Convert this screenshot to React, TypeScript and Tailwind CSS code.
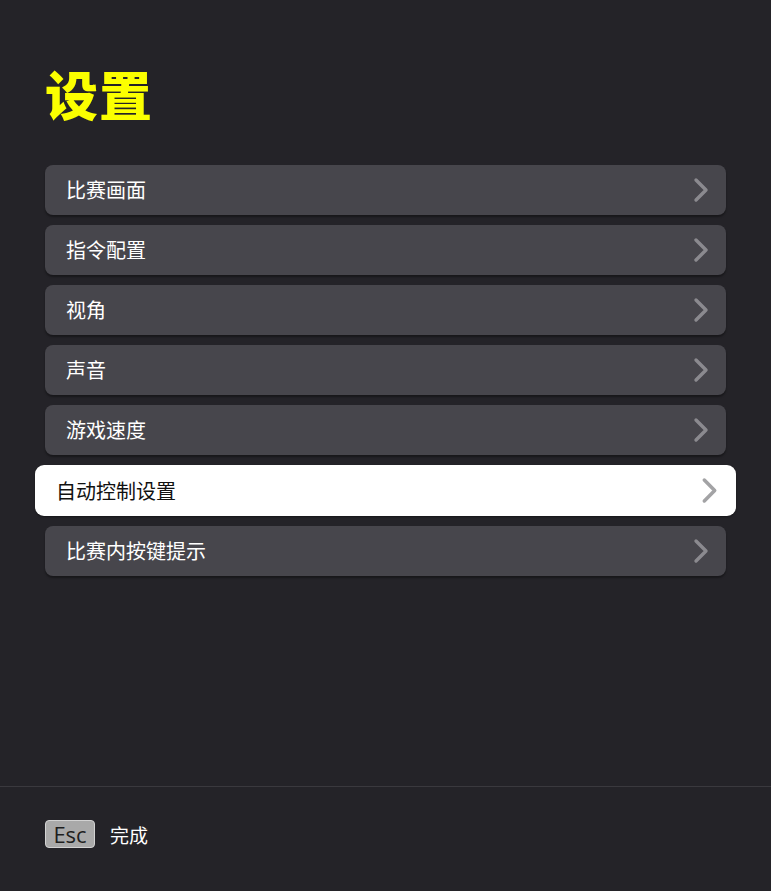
const items = ['比赛画面', '指令配置', '视角', '声音', '游戏速度', '自动控制设置', '比赛内按键提示'];

const font = { fontFamily: '"Noto Sans CJK SC", "Noto Sans", sans-serif' };

function Chevron({ className }: { className: string }) {
  return (
    <svg viewBox="0 0 16 26" className={className} fill="none">
      <polyline
        points="3,3 13,13 3,23"
        stroke="currentColor"
        strokeWidth="3.4"
        strokeLinecap="round"
        strokeLinejoin="round"
      />
    </svg>
  );
}

function Row({ label, active }: { label: string; active?: boolean }) {
  return active ? (
    <div className="-mx-[10px] h-[51px] flex items-center justify-between pl-[21px] pr-[18px] rounded-[9px] bg-white shadow-[0_1px_2px_rgba(0,0,0,0.4)]">
      <span className="text-[20px] text-[#111] leading-none">{label}</span>
      <Chevron className="w-[17px] h-[27px] text-[#a3a3a5]" />
    </div>
  ) : (
    <div className="h-[50px] flex items-center justify-between pl-[21px] pr-[17px] rounded-[8px] bg-[#47464c] shadow-[0_2px_2px_rgba(0,0,0,0.35)]">
      <span className="text-[20px] text-white leading-none">{label}</span>
      <Chevron className="w-[16px] h-[26px] text-[#8b8a8f]" />
    </div>
  );
}

export default function App() {
  return (
    <div className="w-[771px] h-[891px] bg-[#242328] flex flex-col" style={font}>
      <div className="flex-1 px-[45px] pt-[59px]">
        <h1 className="text-[53px] font-black leading-[68px] text-[#fbff00] tracking-[1px]">设置</h1>
        <div className="mt-[38px] flex flex-col gap-[10px]">
          {items.map((label) => (
            <Row key={label} label={label} active={label === '自动控制设置'} />
          ))}
        </div>
      </div>
      <div className="h-[105px] border-t border-[#3a393e] flex items-center px-[45px] pb-[10px] gap-[15px]">
        <div className="w-[50px] h-[28px] rounded-[4px] border-[1.5px] border-[#d2d2d2] bg-[#a9a9a9] flex items-center justify-center">
          <span
            className="text-[22px] font-medium leading-none text-[#1e1e1e]"
            style={{ fontFamily: '"Open Sans", sans-serif' }}
          >
            Esc
          </span>
        </div>
        <span className="text-[19px] text-white leading-none">完成</span>
      </div>
    </div>
  );
}
